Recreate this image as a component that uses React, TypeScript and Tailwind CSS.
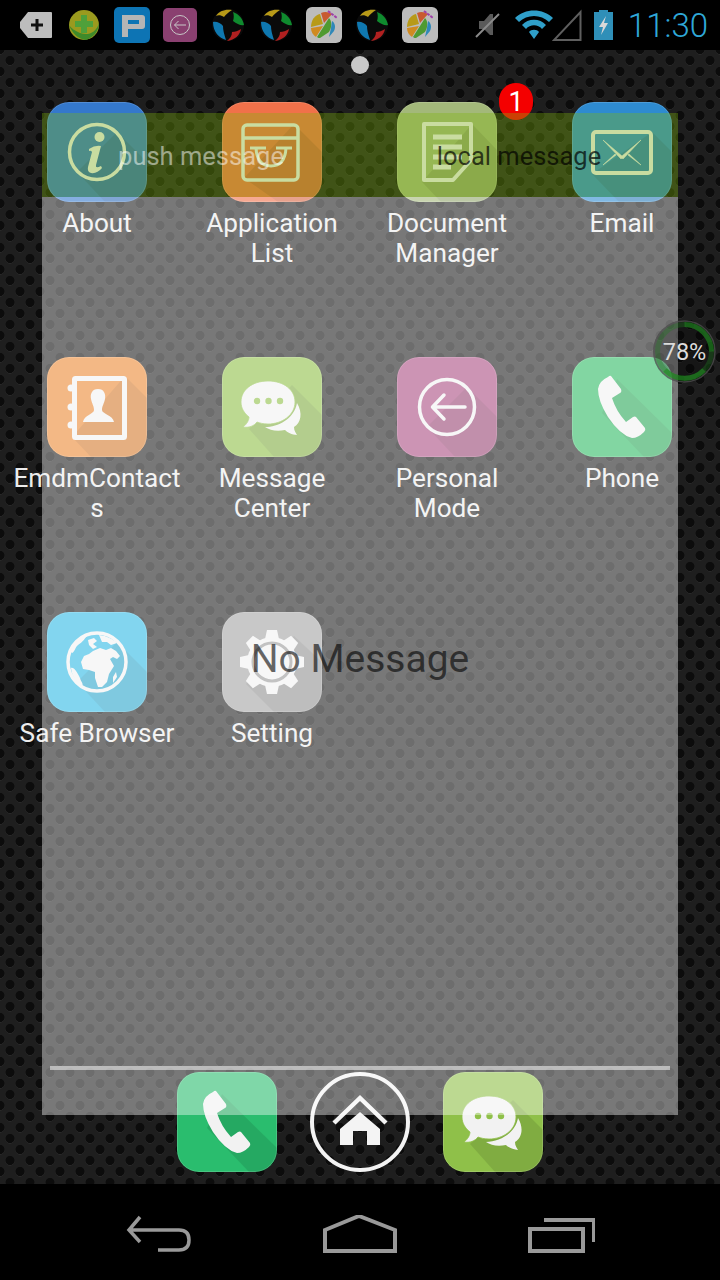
import type { ReactNode } from 'react'

const WHITE = '#f2f2f2'

// Flat icon: rounded square with a long 45deg shadow and a white glyph
function FlatIcon({ color, children }: { color: string; children: ReactNode }) {
  return (
    <div className="h-[100px] w-[100px] shrink-0 overflow-hidden rounded-[22px]" style={{ backgroundColor: color }}>
      <svg viewBox="0 0 100 100" className="h-full w-full">
        {children}
        <rect x="0.5" y="0.5" width="99" height="99" rx="21.5" fill="none" stroke="#fff" strokeOpacity={0.15} />
      </svg>
    </div>
  )
}

const Shade = ({ points }: { points: string }) => <polygon points={points} fill="#000" fillOpacity={0.1} />

const circleShade = '70,30 100,60 100,100 58,100 30,70'

function AboutGlyph() {
  return (
    <>
      <Shade points={circleShade} />
      <circle cx="50" cy="50" r="27.5" fill="none" stroke={WHITE} strokeWidth="3.5" />
      <circle cx="52.5" cy="35" r="5" fill={WHITE} />
      <path d="M42 47 Q48 43 54 44 L49 63 Q48 67 54 64 L55 66 Q50 72 44 71 Q40 70 41 65 L45 50 Q44 48 42 49Z" fill={WHITE} />
    </>
  )
}

function AppListGlyph() {
  return (
    <>
      <Shade points="72,22 100,50 100,100 56,100 22,76" />
      <rect x="21" y="23" width="55" height="55" rx="4" fill="none" stroke={WHITE} strokeWidth="3.5" />
      <path d="M21 36 H76" stroke={WHITE} strokeWidth="3.5" />
      <path d="M28 46 H44 M54 46 H70 M34 46 Q35 64 49 64 Q63 64 64 46" fill="none" stroke={WHITE} strokeWidth="3" />
    </>
  )
}

function DocumentGlyph() {
  return (
    <>
      <Shade points="75,22 100,48 100,100 44,100 25,80" />
      <path d="M27 22 H74 V58 L56 78 H27Z" fill="none" stroke={WHITE} strokeWidth="4" strokeLinejoin="round" />
      <path d="M36 35 H65 M36 45 H65 M36 55 H65 M36 65 H54" stroke={WHITE} strokeWidth="5" />
    </>
  )
}

function EmailGlyph() {
  return (
    <>
      <Shade points="80,30 100,50 100,100 47,100 20,72" />
      <rect x="21" y="30" width="58" height="41" rx="3" fill="none" stroke={WHITE} strokeWidth="4" />
      <path d="M31 38 L50 54 L69 38 L51 57 L50 56 L49 57Z M31 63 L43 52 L44 53Z M69 63 L57 52 L56 53Z" fill={WHITE} stroke={WHITE} strokeWidth="0.6" />
    </>
  )
}

function ContactsGlyph() {
  return (
    <>
      <Shade points="78,19 100,41 100,100 44,100 25,80" />
      <rect x="27.5" y="21.5" width="50" height="59" rx="1" fill="none" stroke={WHITE} strokeWidth="5" />
      <circle cx="24" cy="31" r="3.5" fill={WHITE} />
      <circle cx="24" cy="50" r="3.5" fill={WHITE} />
      <circle cx="24" cy="68" r="3.5" fill={WHITE} />
      <path d="M51 32 C57 32 59 37 58 42 C57 47 55 49 55 53 C55 57 66 58 67 65 H36 C37 58 47 57 47 53 C47 49 45 47 44 42 C43 37 45 32 51 32Z" fill={WHITE} />
    </>
  )
}

function MessageGlyph({ color }: { color: string }) {
  return (
    <>
      <Shade points="70,28 100,58 100,100 52,100 27,72" />
      <path d="M75 46 C81 56 79 66 72 70 C72 74 74 76 75 78 C70 78 65 75 63 73 C54 75 48 73 43 70 C56 70 72 62 75 46Z" fill={WHITE} />
      <path d="M46 24 C62 24 73 33 73 45 C73 58 60 67 46 67 C41 67 38 66 35 65 C32 69 27 71 21 70 C25 67 27 63 27 60 C22 56 19 51 19 45 C19 33 30 24 46 24Z" fill={WHITE} stroke={color} strokeWidth="0.8" />
      <circle cx="35" cy="44" r="3.2" fill={color} />
      <circle cx="46.5" cy="44" r="3.2" fill={color} />
      <circle cx="58" cy="44" r="3.2" fill={color} />
    </>
  )
}

function PersonalGlyph() {
  return (
    <>
      <Shade points={circleShade} />
      <circle cx="50" cy="50" r="27.5" fill="none" stroke={WHITE} strokeWidth="3.5" />
      <path d="M68 50 H36 M47 38 L35.5 50 L47 62" fill="none" stroke={WHITE} strokeWidth="3.5" strokeLinecap="round" strokeLinejoin="round" />
    </>
  )
}

function PhoneGlyph() {
  return (
    <>
      <Shade points="45,22 100,76 100,100 72,100 30,56" />
      <path d="M39 19 L49 32 Q50 35 48 36 L40 41 Q44 54 54 65 L61 60 Q63 59 64 60 L73 71 Q74 73 72 75 Q66 81 60 81 Q48 78 36 60 Q26 44 26 32 Q27 24 36 20 Q38 18 39 19Z" fill={WHITE} />
    </>
  )
}

function GlobeGlyph() {
  return (
    <>
      <Shade points={circleShade} />
      <circle cx="50" cy="50" r="29" fill="none" stroke={WHITE} strokeWidth="3.5" />
      <path d="M23 39 C26 31 33 25 41 23 C37 27 36 30 31 33 C28 35 28 40 25 41Z M24 56 C27 55 30 60 33 66 C34 70 37 72 35 74 C29 70 25 64 24 56Z" fill={WHITE} />
      <path d="M41 28 L47 26 L50 29 L46 32 L50 35 L46 37 L42 33Z M52 23 C60 24 66 27 70 31 L64 33 L60 30 L55 30Z" fill={WHITE} />
      <path d="M46 39 L53 36 L59 38 L64 36 L69 39 L73 44 L70 47 L66 45 L63 47 L67 54 L62 62 L60 70 L55 75 L51 75 L48 66 L48 60 L42 58 L36 57 L34 50 L37 44 L42 42Z" fill={WHITE} />
      <path d="M66 65 L69 60 L70 65 L66 71Z" fill={WHITE} />
    </>
  )
}

function GearGlyph({ ring }: { ring: string }) {
  const teeth = [0, 45, 90, 135, 180, 225, 270, 315]
  return (
    <>
      <Shade points="72,24 100,50 100,100 52,100 24,72" />
      <circle cx="50" cy="50" r="25" fill={WHITE} />
      {teeth.map((a) => (
        <polygon key={a} points="43,27 45,18 55,18 57,27" fill={WHITE} transform={`rotate(${a} 50 50)`} />
      ))}
      <circle cx="50" cy="50" r="19" fill="none" stroke={ring} strokeWidth="3" />
    </>
  )
}

function StatusTag() {
  return (
    <svg width="34" height="30" viewBox="0 0 34 30">
      <path d="M9 2 H32 Q33 2 33 3 V27 Q33 28 32 28 H9 L1 18 V12Z" fill="#bdbdbd" />
      <path d="M18 9 V21 M12 15 H24" stroke="#111" strokeWidth="3" />
    </svg>
  )
}

function StatusShield() {
  return (
    <svg width="32" height="32" viewBox="0 0 32 32">
      <circle cx="16" cy="16" r="15" fill="#9a9a1e" />
      <path d="M1 16 C4 24 10 30 18 31 C26 28 31 22 31 14 C28 24 20 27 12 24 C7 22 3 19 1 16Z" fill="#3f8a2a" />
      <path d="M13 6 H19 V12 H25 V18 H19 V24 H13 V18 H7 V12 H13Z" fill="#4fa03a" />
    </svg>
  )
}

function StatusParking() {
  return (
    <svg width="36" height="36" viewBox="0 0 36 36">
      <rect width="36" height="36" rx="5" fill="#0d74b4" />
      <path d="M8 8 H28 Q31 8 31 11 V19 Q31 22 28 22 H14 V30 H8Z M14 13 V17 H25 V13Z" fill="#b5b5b5" fillRule="evenodd" />
    </svg>
  )
}

function StatusPersonal() {
  return (
    <svg width="34" height="34" viewBox="0 0 34 34">
      <rect width="34" height="34" rx="5" fill="#8a4070" />
      <circle cx="17" cy="17" r="9.5" fill="none" stroke="#c8c8c8" strokeWidth="1" />
      <path d="M23 17 H11.5 M15.5 13 L11.5 17 L15.5 21" fill="none" stroke="#c8c8c8" strokeWidth="1" />
    </svg>
  )
}

function StatusBall() {
  return (
    <svg width="32" height="32" viewBox="0 0 32 32">
      <circle cx="16" cy="16" r="16" fill="#0a0a0a" />
      <path d="M4 7 C7 2 13 0 20 1 C17 3 14 5 12 8 C9 6 6 6 4 7Z" fill="#b89a18" />
      <path d="M21 3 C27 5 31 10 32 16 C29 17 25 15 21 12 C22 9 22 6 21 3Z" fill="#0f8a2e" />
      <path d="M29 20 C28 26 23 31 15 32 C18 29 20 27 20 23 C23 23 26 22 29 20Z" fill="#b02020" />
      <path d="M1 13 C4 12 9 14 11 17 C11 21 12 25 14 31 C7 29 1 23 1 13Z" fill="#0f78b0" />
    </svg>
  )
}

function StatusGame() {
  return (
    <svg width="36" height="36" viewBox="0 0 36 36">
      <rect width="36" height="36" rx="6" fill="#bcbcbc" />
      <path d="M5 20 C5 13 9 8 14 7 L17 17Z" fill="#b89a18" />
      <path d="M15 6 C19 4 23 5 26 7 L18 16Z" fill="#c85a30" />
      <path d="M5 21 L17 19 L10 30 C7 28 5 25 5 21Z" fill="#d08a20" />
      <path d="M18 19 L23 11 C26 14 26 20 23 25 L14 31 C13 31 12 31 11 30Z" fill="#4f9a30" />
      <path d="M26 14 C29 16 30 20 28 24 L23 30 L25 21Z" fill="#2f88b8" />
      <path d="M22 4 L31 11" stroke="#a040a8" strokeWidth="2" strokeDasharray="3 1" />
    </svg>
  )
}

function StatusBar() {
  return (
    <div className="flex h-[50px] shrink-0 items-center bg-black pl-3 pr-[12px]">
      {[
        <StatusTag key="0" />,
        <StatusShield key="1" />,
        <StatusParking key="2" />,
        <StatusPersonal key="3" />,
        <StatusBall key="4" />,
        <StatusBall key="5" />,
        <StatusGame key="6" />,
        <StatusBall key="7" />,
        <StatusGame key="8" />,
      ].map((icon, i) => (
        <div key={i} className="flex h-[50px] w-[48px] items-center justify-center pb-[1px]">
          {icon}
        </div>
      ))}
      <div className="ml-auto flex items-center">
        <svg width="28" height="28" viewBox="0 0 28 28" className="mr-[13px]">
          <path d="M6 10 H11 L17 3 H20 V24 H17 L11 18 H6Z" fill="#5a5a5a" />
          <path d="M3 26 L26 3" stroke="#8a8a8a" strokeWidth="2" />
        </svg>
        <svg width="40" height="32" viewBox="0 0 40 32">
          <path d="M1 9 C11 -1 29 -1 39 9 L35 13 C27 5 13 5 5 13Z M8 16 C14 9 26 9 32 16 L28 20 C24 15 16 15 12 20Z M15 23 C17 20 23 20 25 23 L20 30Z" fill="#2f9fc9" />
        </svg>
        <svg width="30" height="32" viewBox="0 0 30 32" className="-ml-[2px]">
          <path d="M2 31 H28.5 V3Z" fill="none" stroke="#5e5e5e" strokeWidth="2" />
        </svg>
        <svg width="21" height="32" viewBox="0 0 21 32" className="ml-[11px]">
          <path d="M6 1 H15 V3 H20 V31 H1 V3 H6Z" fill="#2f8fb8" />
          <path d="M13 7 L6 18 H10 L8 26 L15 14 H11Z" fill="#d8d8d8" />
        </svg>
        <span className="ml-[14px] text-[33px] font-light leading-none text-[#2fa8d8]">11:30</span>
      </div>
    </div>
  )
}

const apps: { label: string; color: string; glyph: ReactNode }[] = [
  { label: 'About', color: '#3478cc', glyph: <AboutGlyph /> },
  { label: 'Application List', color: '#f0714a', glyph: <AppListGlyph /> },
  { label: 'Document Manager', color: '#a3b87a', glyph: <DocumentGlyph /> },
  { label: 'Email', color: '#2e8bd0', glyph: <EmailGlyph /> },
  { label: 'EmdmContacts', color: '#ec8934', glyph: <ContactsGlyph /> },
  { label: 'Message Center', color: '#8fc049', glyph: <MessageGlyph color="#8fc049" /> },
  { label: 'Personal Mode', color: '#aa4d82', glyph: <PersonalGlyph /> },
  { label: 'Phone', color: '#30bb64', glyph: <PhoneGlyph /> },
  { label: 'Safe Browser', color: '#30b9e4', glyph: <GlobeGlyph /> },
  { label: 'Setting', color: '#a3a3a3', glyph: <GearGlyph ring="#9a9a9a" /> },
]

function AppGrid() {
  return (
    <div className="mt-[28px] grid grid-cols-[repeat(4,175px)] auto-rows-[255px] pl-[9px]">
      {apps.map((app) => (
        <div key={app.label} className="flex flex-col items-center">
          <FlatIcon color={app.color}>{app.glyph}</FlatIcon>
          <div className="ml-[1px] mt-[6px] w-[170px] break-words text-center text-[26.2px] leading-[30px] text-[#ececec]">
            {app.label}
          </div>
        </div>
      ))}
    </div>
  )
}

function HomeButton() {
  return (
    <div className="flex h-[100px] w-[100px] items-center justify-center rounded-full border-4 border-[#f4f4f4]">
      <svg width="60" height="56" viewBox="0 0 60 56">
        <path d="M4 29 L30 4 L56 29" fill="none" stroke="#f4f4f4" strokeWidth="4.5" />
        <path d="M30 18 L50 35 V51 H37 V37 H23 V51 H10 V35Z" fill="#f4f4f4" />
      </svg>
    </div>
  )
}

function Dock() {
  return (
    <div className="mt-auto mb-[12px] flex items-center justify-center gap-[33px]">
      <FlatIcon color="#2abd6e">
        <PhoneGlyph />
      </FlatIcon>
      <HomeButton />
      <FlatIcon color="#8fc049">
        <MessageGlyph color="#8fc049" />
      </FlatIcon>
    </div>
  )
}

// Message popup drawn over the launcher: green tab strip, then the empty list
function MessageOverlay() {
  return (
    <div className="absolute left-[42px] top-[63px] flex h-[1002px] w-[636px] flex-col">
      <div className="flex h-[84px] shrink-0 bg-[rgba(127,180,11,0.354)] pt-[3px] text-[25.5px]">
        <div className="flex w-1/2 items-center justify-center text-white/50">push message</div>
        <div className="flex w-1/2 items-center justify-center text-black/70">local message</div>
      </div>
      <div className="flex flex-1 items-center justify-center bg-white/40 pt-[7px] text-[39px] text-black/60">No Message</div>
    </div>
  )
}

function BatteryBubble() {
  return (
    <div className="absolute left-[653px] top-[270px] flex h-[63px] w-[63px] items-center justify-center rounded-full bg-black/25">
      <svg viewBox="0 0 63 63" className="absolute inset-0">
        <circle cx="31.5" cy="31.5" r="30.5" fill="none" stroke="#555" strokeOpacity={0.7} strokeWidth="1.5" />
        <circle cx="31.5" cy="31.5" r="27" fill="none" stroke="#1f7a1f" strokeOpacity={0.35} strokeWidth="5" />
        <path d="M31.5 4.5 A27 27 0 0 1 58.5 31.5" fill="none" stroke="#1f8a1f" strokeOpacity={0.5} strokeWidth="5" />
        <path d="M51 50 A27 27 0 0 1 12 50" fill="none" stroke="#1f8a1f" strokeOpacity={0.6} strokeWidth="5" />
      </svg>
      <span className="relative pt-[2px] text-[23.5px] text-[#dcdcdc]">78%</span>
    </div>
  )
}

function NavBar() {
  return (
    <div className="flex h-[96px] shrink-0 items-center justify-center bg-black pt-[6px]">
      <div className="flex w-[200px] justify-center">
        <svg width="70" height="40" viewBox="0 0 70 40">
          <path d="M15 2 L4 15 L15 27 M4 15 H54 Q64 15 64 25 Q64 35 54 35 H33" fill="none" stroke="#999" strokeWidth="3.5" />
        </svg>
      </div>
      <div className="flex w-[200px] justify-center">
        <svg width="76" height="40" viewBox="0 0 76 40">
          <path d="M3 15 L37 1 L73 15 V36 H3Z" fill="none" stroke="#999" strokeWidth="4" />
        </svg>
      </div>
      <div className="flex w-[200px] justify-center">
        <svg width="70" height="40" viewBox="0 0 70 40">
          <path d="M5 14 H58 V36 H5Z M19 5 H69 V27" fill="none" stroke="#999" strokeWidth="4" />
        </svg>
      </div>
    </div>
  )
}

export default function App() {
  return (
    <div className="flex h-[1280px] w-[720px] flex-col overflow-hidden bg-black font-['Roboto',sans-serif]">
      <StatusBar />
      <div className="relative flex flex-1 flex-col bg-[#1e1e1e] bg-[radial-gradient(circle_at_5px_5.5px,#0c0c0c_4.2px,transparent_4.9px),radial-gradient(circle_at_15px_16.5px,#0c0c0c_4.2px,transparent_4.9px),radial-gradient(circle_at_5px_6.1px,#2c2c2c_4.2px,transparent_4.9px),radial-gradient(circle_at_15px_17.1px,#2c2c2c_4.2px,transparent_4.9px)] bg-size-[20px_22px] bg-position-[5px_5px]">
        <div className="mx-auto mt-[6px] h-[18px] w-[18px] shrink-0 rounded-full bg-[#c9c9c9]" />
        <AppGrid />
        <div className="absolute left-[499px] top-[33px] flex h-[37px] w-[34px] items-center justify-center rounded-full bg-[#f40000] pt-[1px] text-[27px] leading-none text-white">
          1
        </div>
        <Dock />
        <div className="absolute left-[50px] top-[1016px] h-[4px] w-[620px] bg-white/50" />
        <MessageOverlay />
        <BatteryBubble />
      </div>
      <NavBar />
    </div>
  )
}
